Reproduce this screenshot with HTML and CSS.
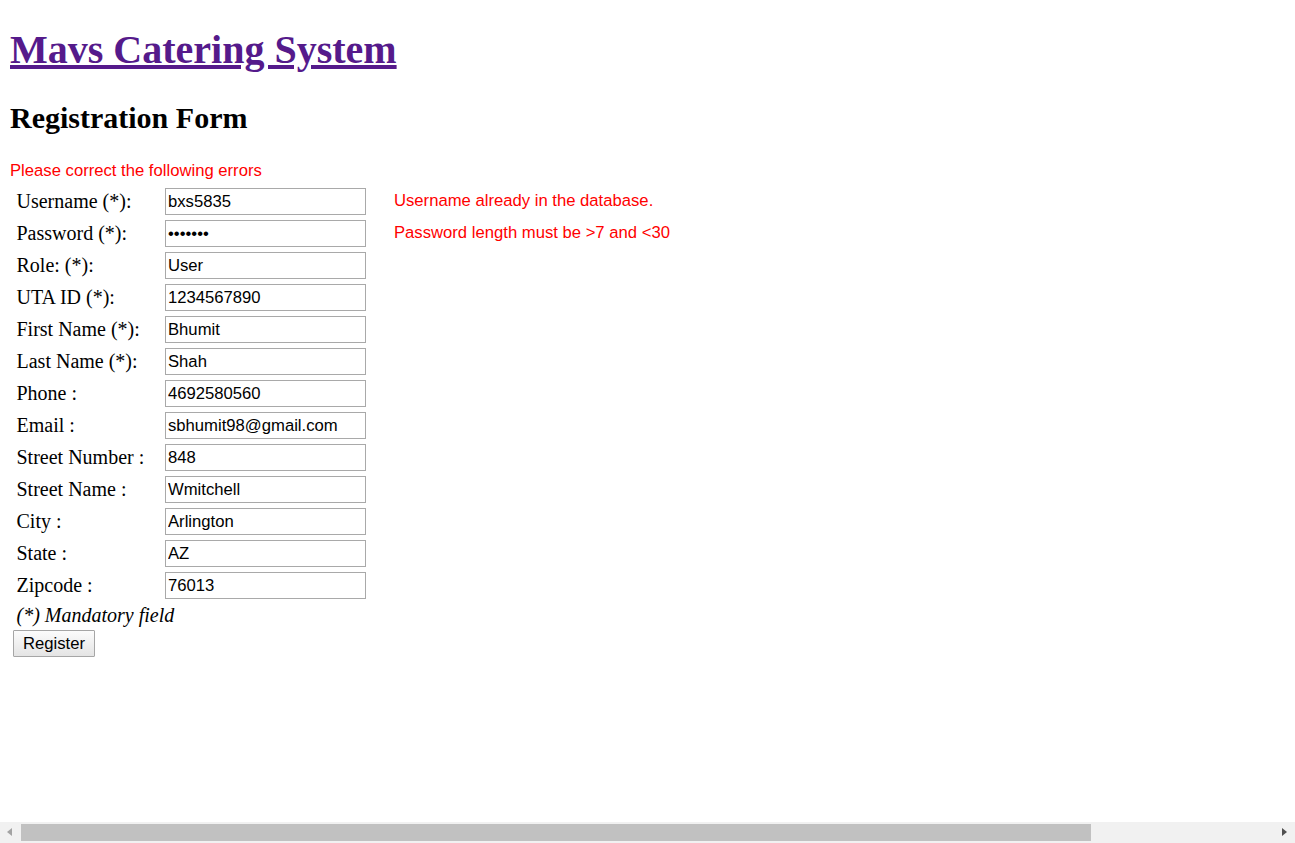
FILE: index.html
```html
<!DOCTYPE html>
<html>
<head>
<meta charset="utf-8">
<title>Registration</title>
<link rel="stylesheet" href="styles.css">
</head>
<body>
<div class="page">
  <h1 class="site-title"><a href="#">Mavs Catering System</a></h1>
  <h2 class="form-title">Registration Form</h2>
  <div class="error-head">Please correct the following errors</div>
  <form class="reg-form">
    <div class="row"><span class="lbl">Username (*):</span><input class="field" type="text" value="bxs5835"><span class="err">Username already in the database.</span></div>
    <div class="row"><span class="lbl">Password (*):</span><input class="field" type="password" value="1234567"><span class="err">Password length must be &gt;7 and &lt;30</span></div>
    <div class="row"><span class="lbl">Role: (*):</span><input class="field" type="text" value="User"><span class="err"></span></div>
    <div class="row"><span class="lbl">UTA ID (*):</span><input class="field" type="text" value="1234567890"><span class="err"></span></div>
    <div class="row"><span class="lbl">First Name (*):</span><input class="field" type="text" value="Bhumit"><span class="err"></span></div>
    <div class="row"><span class="lbl">Last Name (*):</span><input class="field" type="text" value="Shah"><span class="err"></span></div>
    <div class="row"><span class="lbl">Phone :</span><input class="field" type="text" value="4692580560"><span class="err"></span></div>
    <div class="row"><span class="lbl">Email :</span><input class="field" type="text" value="sbhumit98@gmail.com"><span class="err"></span></div>
    <div class="row"><span class="lbl">Street Number :</span><input class="field" type="text" value="848"><span class="err"></span></div>
    <div class="row"><span class="lbl">Street Name :</span><input class="field" type="text" value="Wmitchell"><span class="err"></span></div>
    <div class="row"><span class="lbl">City :</span><input class="field" type="text" value="Arlington"><span class="err"></span></div>
    <div class="row"><span class="lbl">State :</span><input class="field" type="text" value="AZ"><span class="err"></span></div>
    <div class="row"><span class="lbl">Zipcode :</span><input class="field" type="text" value="76013"><span class="err"></span></div>
    <div class="note">(*) Mandatory field</div>
    <div class="actions"><button class="btn" type="button">Register</button></div>
  </form>
</div>
<div class="hscroll">
  <span class="arrow arrow-left"></span>
  <span class="track"><span class="thumb"></span></span>
  <span class="arrow arrow-right"></span>
</div>
</body>
</html>
```

FILE: styles.css
```css
html, body {
  margin: 0;
  padding: 0;
  background: #ffffff;
}
body {
  font-family: "Liberation Serif", "Times New Roman", serif;
  font-size: 20px;
  color: #000;
}
.page {
  padding: 26.8px 10px 0 10px;
}
.site-title {
  margin: 0;
  font-size: 40px;
  line-height: 46px;
  font-weight: bold;
}
.site-title a {
  color: #551a8b;
  text-decoration: underline;
}
.form-title {
  margin: 27.8px 0 0 0;
  font-size: 30px;
  line-height: 34.5px;
  font-weight: bold;
}
.error-head {
  margin-top: 25.5px;
  font-family: "Liberation Sans", Arial, sans-serif;
  font-size: 16.67px;
  line-height: 19.2px;
  color: #ff0000;
}
.reg-form {
  margin: 8.2px 0 0 0;
  display: flex;
  flex-direction: column;
}
.row {
  display: grid;
  grid-template-columns: 155px 201px auto;
  align-items: center;
  height: 27px;
  margin-bottom: 5px;
}
.lbl {
  padding-left: 6.5px;
  line-height: 23px;
  white-space: nowrap;
}
.field {
  box-sizing: border-box;
  width: 201px;
  height: 27px;
  margin: 0;
  padding: 2px 2px 0 2px;
  border: 1px solid #a9a9a9;
  font-family: "Liberation Sans", Arial, sans-serif;
  font-size: 16.67px;
  color: #000;
  background: #fff;
  outline: none;
}
.err {
  padding-left: 28px;
  font-family: "Liberation Sans", Arial, sans-serif;
  font-size: 16.67px;
  line-height: 19.2px;
  color: #ff0000;
  white-space: nowrap;
  position: relative;
  top: -0.5px;
}
.note {
  margin-top: 0.5px;
  padding-left: 6.5px;
  font-style: italic;
  line-height: 23px;
}
.actions {
  margin-top: 2.5px;
  padding-left: 3px;
}
.btn {
  box-sizing: border-box;
  width: 82px;
  height: 27px;
  margin: 0;
  padding: 2px 0 0 0;
  border: 1px solid #a6a6a6;
  border-radius: 1px;
  background: linear-gradient(#fcfcfc, #e4e4e4);
  font-family: "Liberation Sans", Arial, sans-serif;
  font-size: 16.67px;
  color: #000;
}
.hscroll {
  position: fixed;
  left: 0;
  right: 0;
  bottom: 0;
  height: 21px;
  background: #f1f1f1;
  display: flex;
  align-items: center;
}
.arrow {
  width: 21px;
  height: 21px;
  position: relative;
  flex: none;
}
.arrow-left::after {
  content: "";
  position: absolute;
  left: 7px;
  top: 6px;
  border-style: solid;
  border-width: 4.5px 5px 4.5px 0;
  border-color: transparent #a3a3a3 transparent transparent;
}
.arrow-right::after {
  content: "";
  position: absolute;
  left: 8px;
  top: 6px;
  border-style: solid;
  border-width: 4.5px 0 4.5px 5px;
  border-color: transparent transparent transparent #505050;
}
.track {
  flex: 1;
  height: 17px;
  display: flex;
}
.thumb {
  width: 1070px;
  height: 17px;
  background: #c1c1c1;
}
```
